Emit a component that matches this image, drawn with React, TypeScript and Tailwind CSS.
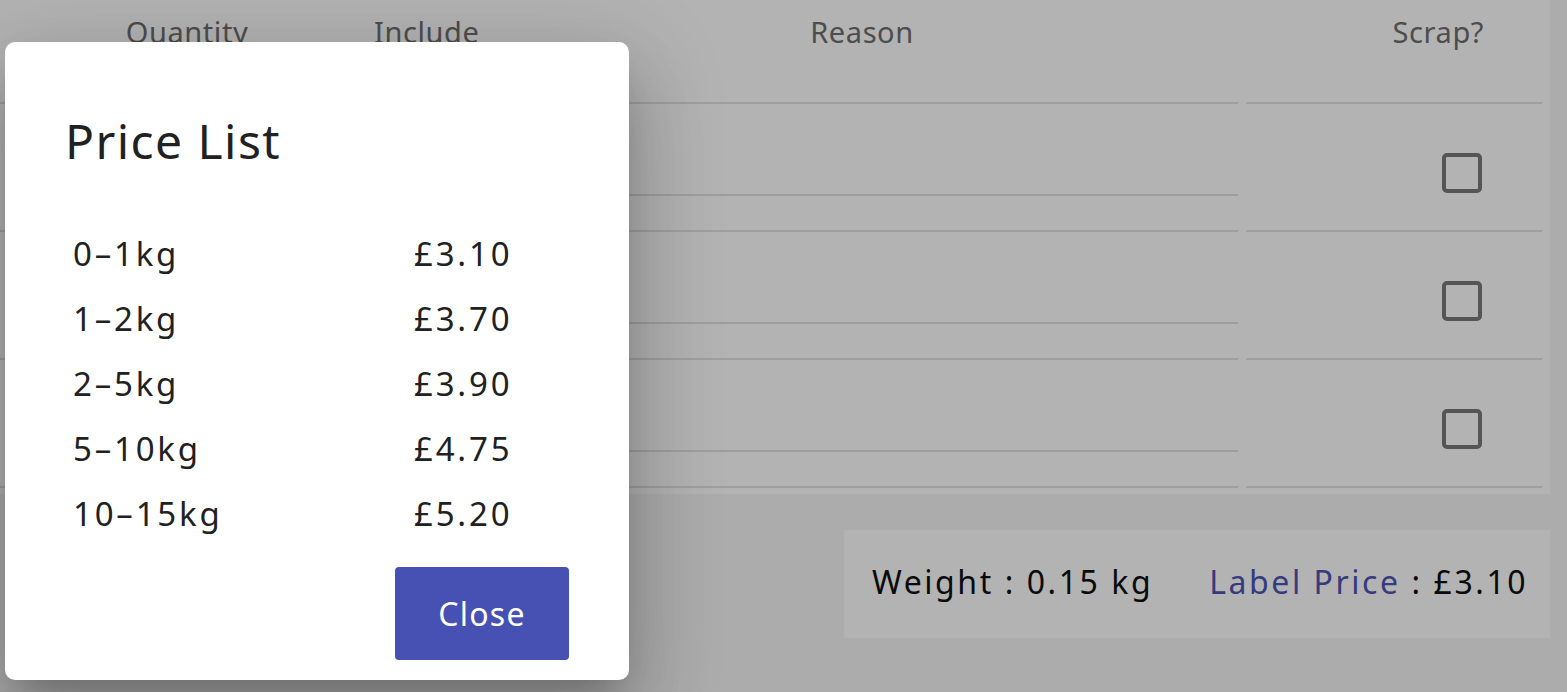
import { useState } from 'react';

const prices = [
  { range: '0–1kg', price: '£3.10' },
  { range: '1–2kg', price: '£3.70' },
  { range: '2–5kg', price: '£3.90' },
  { range: '5–10kg', price: '£4.75' },
  { range: '10–15kg', price: '£5.20' },
];

const Divider = () => (
  <div className="flex">
    <div className="h-[2px] w-[1238px] bg-[#9e9e9e]" />
    <div className="ml-[8px] h-[2px] w-[296px] bg-[#9e9e9e]" />
  </div>
);

const Checkbox = () => (
  <div className="h-[40px] w-[40px] rounded-[5px] border-[4.5px] border-[#555555]" />
);

const ItemRow = () => (
  <>
    <div className="flex h-[126px]">
      <div className="flex w-[1238px] items-end pb-[34px] pl-[486px]">
        <div className="h-[2px] w-full bg-[#9e9e9e]" />
      </div>
      <div className="ml-[8px] flex w-[296px] items-center justify-end pr-[60px] pt-[12px]">
        <Checkbox />
      </div>
    </div>
    <Divider />
  </>
);

export default function App() {
  const [open, setOpen] = useState(true);

  return (
    <div className="relative h-[692px] w-full overflow-hidden bg-[#acacac] font-['Noto_Sans',sans-serif]">
      {/* ページ本体（オーバーレイ越し） */}
      <div className="flex flex-col">
        <div className="w-[1550px] bg-[#b3b3b3] pb-[6px]">
          <div className="flex h-[102px] pt-[10px] text-[29px] text-[#4d4d4d] tracking-[0.02em]">
            <div className="w-[374px] text-center">Quantity</div>
            <div className="w-[102px] text-center">Include</div>
            <div className="ml-[10px] w-[752px] text-center">Reason</div>
            <div className="ml-[8px] w-[296px] pr-[58px] text-right">Scrap?</div>
          </div>
          <Divider />
          <ItemRow />
          <ItemRow />
          <ItemRow />
        </div>

        <div className="flex justify-end pr-[17px] pt-[36px]">
          <div className="flex h-[108px] w-[706px] items-center gap-[56px] whitespace-nowrap bg-[#b3b3b3] px-[28px] pb-[4px] text-[32px] tracking-[0.08em] text-[#0a0a0a]">
            <span>Weight : 0.15 kg</span>
            <span>
              <span className="text-[#353b7e]">Label Price</span> : £3.10
            </span>
          </div>
        </div>
      </div>

      {/* 料金表ダイアログ */}
      {open && (
        <div className="absolute left-[5px] top-[42px] flex h-[638px] w-[624px] flex-col rounded-[10px] bg-white text-[#212121] shadow-[0_22px_30px_-14px_rgba(0,0,0,0.2),0_48px_76px_6px_rgba(0,0,0,0.14),0_18px_92px_16px_rgba(0,0,0,0.12)]">
          <h2 className="pl-[60px] pt-[65px] text-[48px] leading-[68px] tracking-[0.03em]">Price List</h2>
          <div className="mt-[46px] flex flex-col pl-[68px] text-[33px] tracking-[0.085em]">
            {prices.map((p) => (
              <div key={p.range} className="flex h-[65px] items-center">
                <span className="w-[341px]">{p.range}</span>
                <span>{p.price}</span>
              </div>
            ))}
          </div>
          <div className="mt-auto flex justify-end pb-[20px] pr-[60px]">
            <button
              onClick={() => setOpen(false)}
              className="h-[93px] w-[174px] rounded-[4px] bg-[#4751b3] text-[32px] tracking-[0.04em] text-white"
            >
              Close
            </button>
          </div>
        </div>
      )}
    </div>
  );
}
